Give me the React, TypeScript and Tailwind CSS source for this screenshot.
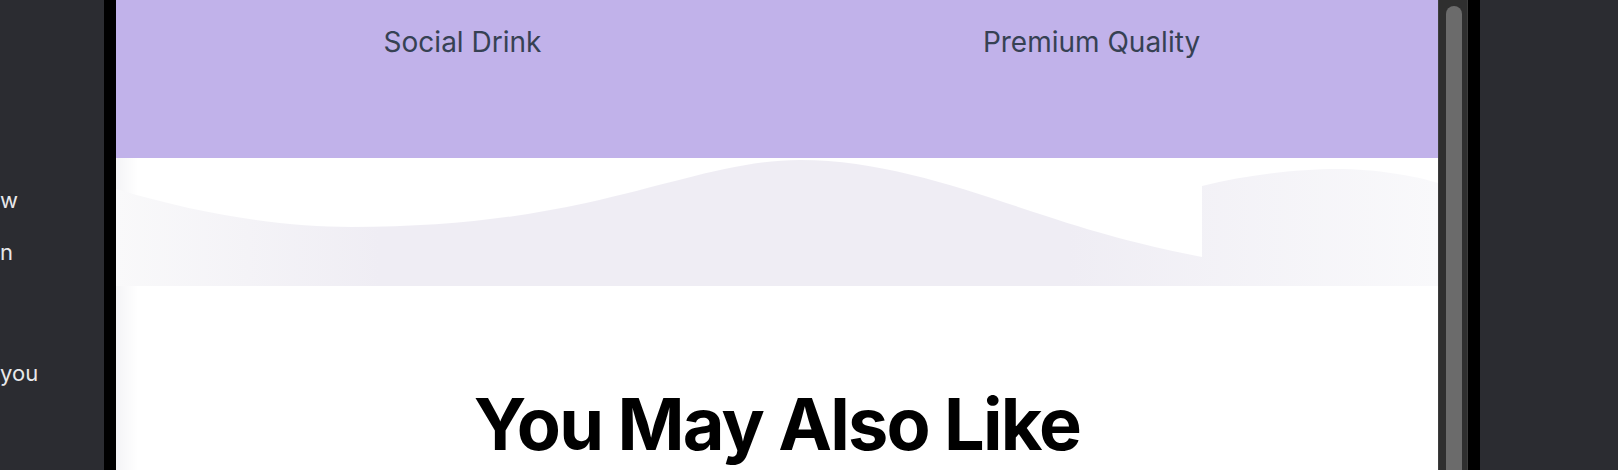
const features = ["Social Drink", "Premium Quality"];

// only the line endings of the side panel are in view
const sideLines = [
  { text: "w", className: "" },
  { text: "n", className: "mt-[24px]" },
  { text: "you", className: "mt-[93px]" },
];

function SidePanel() {
  return (
    <aside className="w-[104px] shrink-0 overflow-hidden pt-[186px] text-[22px] leading-[28px] text-[#e8e8ea]">
      {sideLines.map((line) => (
        <p key={line.text} className={line.className}>
          {line.text}
        </p>
      ))}
    </aside>
  );
}

function Wave() {
  return (
    <svg viewBox="0 0 1322 128" className="block h-[128px] w-full" preserveAspectRatio="none">
      <defs>
        <linearGradient id="waveFill" x1="0" x2="1" y1="0" y2="0">
          <stop offset="0" stopColor="#f9f9fa" />
          <stop offset="0.2" stopColor="#efedf4" />
          <stop offset="0.72" stopColor="#efedf4" />
          <stop offset="1" stopColor="#f9f9fb" />
        </linearGradient>
      </defs>
      <path
        fill="url(#waveFill)"
        d="M0 31 C 90 58, 170 69, 235 69 C 330 69, 400 60, 470 45 C 560 25, 620 2, 684 2 C 770 2, 850 32, 930 58 C 990 78, 1040 90, 1086 99 L 1086 28 C 1130 17, 1180 11, 1221 11 C 1260 11, 1300 18, 1322 25 L 1322 128 L 0 128 Z"
      />
    </svg>
  );
}

function Scrollbar() {
  return (
    <div className="w-[30px] shrink-0 border-x border-[#3d3d3d] bg-[#2f2f2f] px-[7px] pt-[6px]">
      <div className="h-[600px] w-[16px] rounded-full bg-[#6b6b6b]" />
    </div>
  );
}

export default function App() {
  return (
    <div className="flex h-[470px] w-[1618px] overflow-hidden bg-[#2b2c31] font-['Inter',sans-serif]">
      <SidePanel />
      <div className="w-[12px] shrink-0 bg-black" />

      <main className="flex w-[1322px] shrink-0 flex-col bg-[linear-gradient(to_right,#f4f4f6,#ffffff_22px)]">
        <section className="h-[158px] bg-[#c1b2ea] px-8 pt-[26px]">
          <div className="grid grid-cols-2">
            {features.map((f) => (
              <p key={f} className="text-center text-[28px] leading-[32px] text-gray-700">
                {f}
              </p>
            ))}
          </div>
        </section>

        <Wave />

        <section className="pt-[102px]">
          <h2 className="text-center text-7xl font-bold tracking-tight text-black">
            You May Also Like
          </h2>
        </section>
      </main>

      <Scrollbar />
      <div className="w-[12px] shrink-0 bg-black" />
      <div className="flex-1" />
    </div>
  );
}
